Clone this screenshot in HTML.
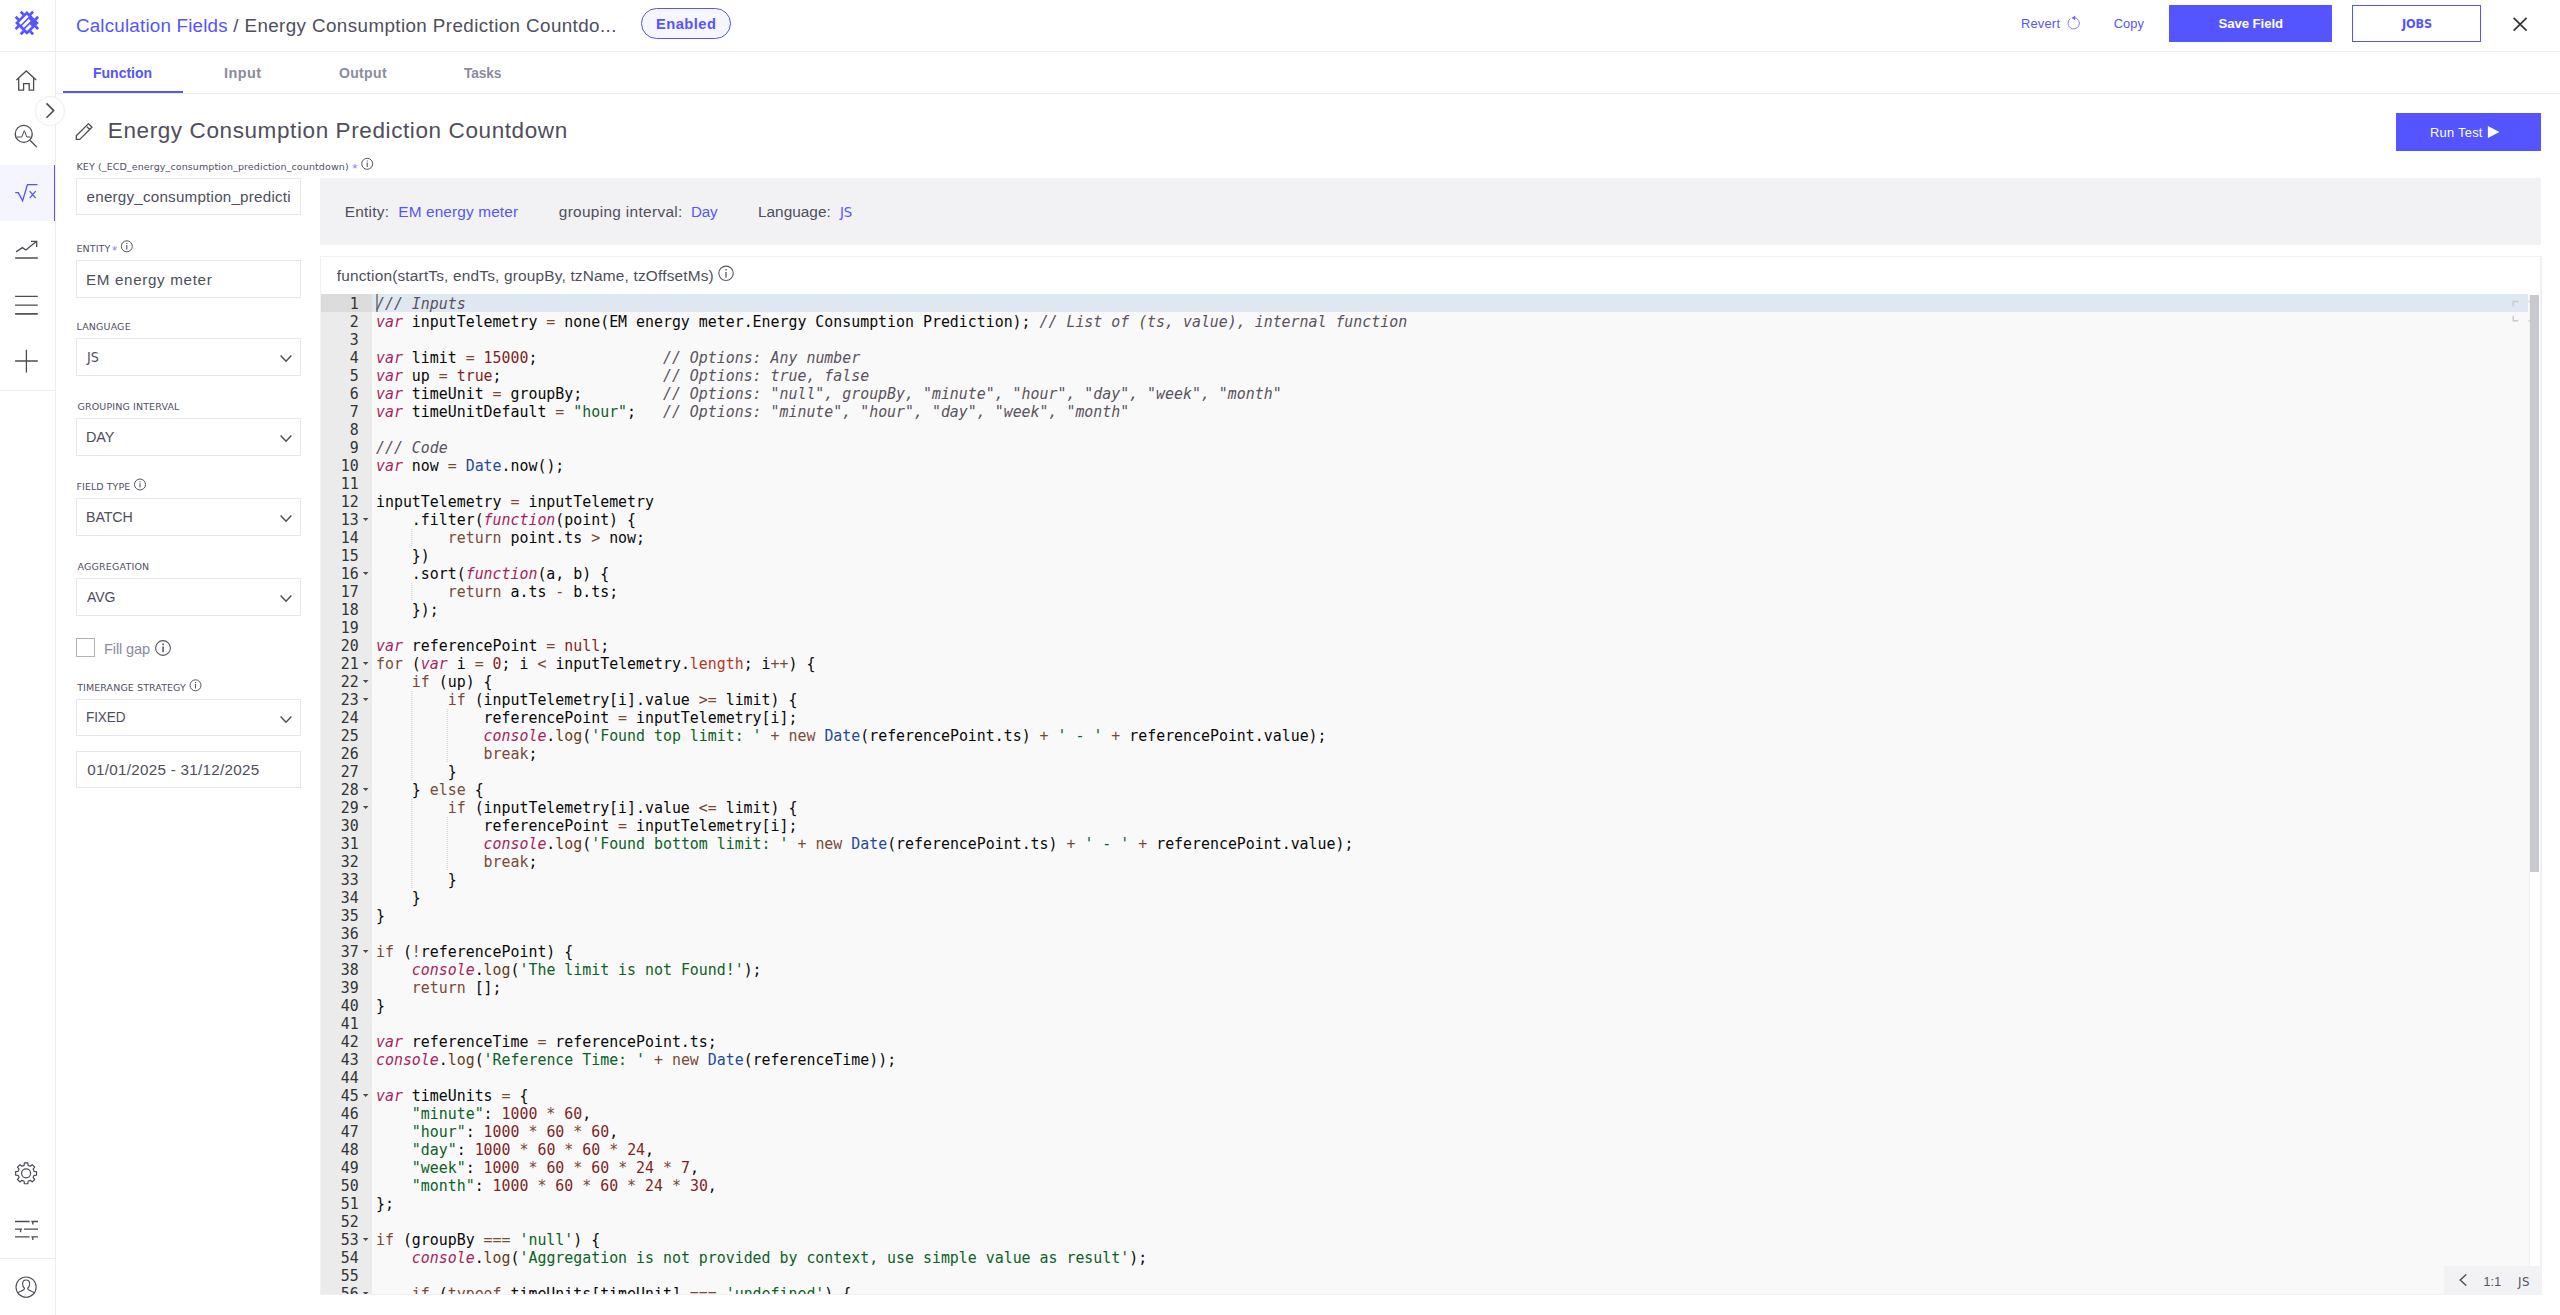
<!DOCTYPE html>
<html lang="en">
<head>
<meta charset="utf-8">
<title>Calculation Fields / Energy Consumption Prediction Countdown</title>
<style>
html,body{margin:0;padding:0;background:#fff;}
body{width:2560px;height:1315px;position:relative;overflow:hidden;font-family:"Liberation Sans", sans-serif;}
.abs{position:absolute;}
.t{position:absolute;white-space:pre;line-height:1;font-family:"Liberation Sans", sans-serif;}
.hl{position:absolute;height:1px;background:#eeeef1;}
.vl{position:absolute;width:1px;background:#eeeef1;}
.box{position:absolute;left:76px;width:223px;height:36px;border:1px solid #e7e7eb;background:#fff;}
.btn{position:absolute;box-sizing:border-box;}
svg{position:absolute;left:0;top:0;overflow:visible;}
.ic{fill:none;stroke:#4b4b57;stroke-width:1.3;stroke-linecap:butt;stroke-linejoin:miter;}
.icp{fill:none;stroke:#5555ff;stroke-width:1.3;}
/* editor */
#ed{position:absolute;left:320px;top:256px;width:2219px;height:1037px;border:1px solid #f1f1f5;border-right-width:2px;background:#fff;}
#gutter{position:absolute;left:321px;top:294px;width:51px;height:1000px;background:#ebebeb;overflow:hidden;}
#codebg{position:absolute;left:372px;top:294px;width:2157px;height:1000px;background:#f9f9f9;overflow:hidden;}
#gl{position:absolute;left:0;top:1px;width:54.8px;transform-origin:0 0;transform:scaleX(0.9308);font:16px/18px "DejaVu Sans Mono","Liberation Mono",monospace;color:#333;}
.gl{height:18px;text-align:right;padding-right:14.2px;position:relative;white-space:pre;}

.fw{position:absolute;right:3.9px;top:7.4px;width:0;height:0;border-left:3.1px solid transparent;border-right:3.1px solid transparent;border-top:3.8px solid #4a4a4a;}
#cl{position:absolute;left:4px;top:1px;transform-origin:0 0;transform:scaleX(0.9308);font:16px/18px "DejaVu Sans Mono","Liberation Mono",monospace;color:#080808;white-space:normal;}
.cl{height:18px;white-space:pre;}
.c{color:#5A525F;font-style:italic}
.s{color:#0B6125}
.n{color:#811F24}
.k{color:#794938}
.st{color:#A71D5D;font-style:italic}
.v{color:#234A97}
.sc{color:#B4371F}
.sf{color:#693A17}
.ig{display:inline-block;height:18px;vertical-align:top;background:linear-gradient(to bottom,rgba(0,0,0,.2) 50%,rgba(0,0,0,0) 50%) right top/1px 2px repeat-y;}
</style>
</head>
<body>
<!-- ======= frame lines ======= -->
<div class="hl" style="left:0;top:51px;width:2560px"></div>
<div class="vl" style="left:55px;top:0;height:1315px"></div>
<div class="hl" style="left:56px;top:93px;width:2504px"></div>
<div class="hl" style="left:0;top:390px;width:55px"></div>
<div class="hl" style="left:0;top:1258px;width:55px"></div>

<!-- ======= sidebar ======= -->
<nav>
<div class="abs" style="left:0;top:165px;width:54px;height:56px;background:#f5f5ff"></div>
<div class="abs" style="left:54px;top:165px;width:1.4px;height:56px;background:#5555ff"></div>
<svg width="56" height="1315" viewBox="0 0 56 1315">
  <!-- logo -->
  <g transform="translate(26.9,22.9) rotate(45) scale(1.065)" fill="#5555ff">
    <rect x="-7.85" y="-7.85" width="15.7" height="15.7"/>
    <rect x="-4.65" y="-11.6" width="2.6" height="4"/><rect x="2.05" y="-11.6" width="2.6" height="4"/>
    <rect x="-4.65" y="7.6" width="2.6" height="4"/><rect x="2.05" y="7.6" width="2.6" height="4"/>
    <rect y="-4.65" x="-11.6" height="2.6" width="4"/><rect y="2.05" x="-11.6" height="2.6" width="4"/>
    <rect y="-4.65" x="7.6" height="2.6" width="4"/><rect y="2.05" x="7.6" height="2.6" width="4"/>
    <g fill="#fff">
      <rect x="-5.5" y="-5.3" width="2.6" height="10.5"/>
      <rect x="-1.35" y="-3.8" width="2.6" height="9"/>
      <rect x="2.8" y="-1.0" width="2.6" height="6.2"/>
    </g>
  </g>
  <!-- home -->
  <path class="ic" d="M16.4 79.9 L26.3 70.9 L36.2 79.9 M18.7 78 V90.1 H23.6 V83.6 H29.2 V90.1 H33.6 V78"/>
  <!-- search / analyze -->
  <circle class="ic" cx="23.75" cy="133.9" r="8.5"/>
  <path class="ic" d="M30 140.2 L36.8 147.1"/>
  <path class="ic" style="stroke-width:1" d="M16.8 137 H21.8 L24.3 130.6 L26.8 137 H30.6"/>
  <!-- sqrt x (active) -->
  <path class="icp" d="M15.2 192.6 H18.3 L22.6 200.8 L27.4 184.7 H37.5 M29.7 191.2 L35.7 198.2 M35.7 191.2 L29.7 198.2"/>
  <!-- trend -->
  <path class="ic" d="M16.1 251.9 L22.4 247.6 L25.9 250 L36.3 241.5 M31 241.3 H36.7 V247 M15.1 258 H37.8"/>
  <!-- menu -->
  <path class="ic" d="M15.1 296.4 H37.8 M15.1 305.1 H37.8"/>
  <path class="ic" style="stroke-width:1.7" d="M15.1 313.9 H37.8"/>
  <!-- plus -->
  <path class="ic" d="M15.1 361 H37.8 M26.4 349.8 V372.4"/>
  <!-- gear -->
  <path class="ic" style="stroke-linejoin:round;stroke-width:1.2" d="M24.12 1165.34 L24.36 1162.84 L27.84 1162.84 L28.08 1165.34 L30.33 1166.27 L32.26 1164.68 L34.72 1167.14 L33.13 1169.07 L34.06 1171.32 L36.56 1171.56 L36.56 1175.04 L34.06 1175.28 L33.13 1177.53 L34.72 1179.46 L32.26 1181.92 L30.33 1180.33 L28.08 1181.26 L27.84 1183.76 L24.36 1183.76 L24.12 1181.26 L21.87 1180.33 L19.94 1181.92 L17.48 1179.46 L19.07 1177.53 L18.14 1175.28 L15.64 1175.04 L15.64 1171.56 L18.14 1171.32 L19.07 1169.07 L17.48 1167.14 L19.94 1164.68 L21.87 1166.27Z"/>
  <circle class="ic" style="stroke-width:1.2" cx="26.1" cy="1173.3" r="4.5"/>
  <!-- sliders -->
  <path class="ic" d="M15 1221.5 H29.6 M31.4 1221.5 H38 M32.8 1221.5 V1224.6 M15 1229.2 H22 M20.6 1229.2 V1232.2 M24 1229.2 H38 M15 1236.8 H29.6 M31.4 1236.8 H38 M32.8 1236.8 V1239.9"/>
  <!-- user -->
  <circle class="ic" style="stroke-width:1.1" cx="26.1" cy="1287.1" r="10.1"/>
  <path class="ic" style="stroke-width:1.1;stroke-linejoin:round" d="M26.1 1280 c2.2 0 3.5 1.7 3.5 3.9 c0 2 -1 3.6 -1.9 4.3 c0 1.6 1.2 2 3.2 2.7 c2 .7 3.2 1.4 3.6 2.4 M26.1 1280 c-2.2 0 -3.5 1.7 -3.5 3.9 c0 2 1 3.6 1.9 4.3 c0 1.6 -1.2 2 -3.2 2.7 c-2 .7 -3.2 1.4 -3.6 2.4"/>
</svg>
<!-- collapse button -->
<div class="abs" style="left:35px;top:96px;width:28px;height:28px;border-radius:50%;background:#fff;border:1px solid #f0f0f2;box-shadow:0 0 2px rgba(0,0,0,.04)"></div>
<svg width="80" height="130" viewBox="0 0 80 130"><path class="ic" style="stroke-width:1.6" d="M46.5 103.4 L53.7 110.6 L46.5 117.8"/></svg>
</nav>

<!-- ======= top bar ======= -->
<header>
<div class="abs" style="left:641px;top:8px;width:88px;height:29px;border:1px solid #5555ff;border-radius:16px;background:#f6f6ff"></div>
<div class="btn" style="left:2169px;top:5px;width:163px;height:37px;background:#5555ff"></div>
<div class="btn" style="left:2352px;top:5px;width:129px;height:37px;border:1px solid #5555ff;background:#fff"></div>
<svg width="2560" height="52" viewBox="0 0 2560 52">
  <!-- revert icon -->
  <path class="icp" style="stroke-width:1;stroke:#7f7dfd" d="M2070.2 18.7 A5.7 5.7 0 1 0 2074.6 17.6"/>
  <path fill="#6a68fe" d="M2071.6 17.9 L2075.2 15.6 L2075.2 20.3 Z"/>
  <!-- close -->
  <path class="ic" style="stroke:#333;stroke-width:1.7" d="M2513.6 17.8 L2526.6 30.6 M2526.6 17.8 L2513.6 30.6"/>
</svg>
</header>

<!-- ======= tabs ======= -->
<div class="abs" style="left:63px;top:91px;width:120px;height:2px;background:#5555ff"></div>

<!-- ======= title row ======= -->
<svg width="120" height="150" viewBox="0 0 120 150">
  <path class="ic" style="stroke-linejoin:round" d="M88.5 123.6 L91.9 127.2 L79.8 139.4 H76.3 V135.7 Z M86.9 126.7 L89.9 129.6"/>
</svg>
<div class="btn" style="left:2396px;top:113px;width:145px;height:38px;background:#5555ff"></div>
<svg width="2560" height="160" viewBox="0 0 2560 160"><path fill="#fff" d="M2487.9 125.9 L2499.4 131.9 L2487.9 138 Z"/></svg>

<!-- ======= left form ======= -->
<section>
<div class="box" style="top:178px;height:35px"></div>
<div class="box" style="top:260px"></div>
<div class="box" style="top:338px"></div>
<div class="box" style="top:418px"></div>
<div class="box" style="top:498px"></div>
<div class="box" style="top:578px"></div>
<div class="box" style="top:699px;height:35px"></div>
<div class="box" style="top:751px;height:35px"></div>
<div class="abs" style="left:76px;top:638px;width:17px;height:17px;border:1px solid #b2b2b4;background:#fff"></div>
<svg width="320" height="800" viewBox="0 0 320 800">
  <g class="ic" style="stroke-width:1.4">
    <path d="M280.6 355.6 L286 361.2 L291.4 355.6"/>
    <path d="M280.6 435.6 L286 441.2 L291.4 435.6"/>
    <path d="M280.6 515.6 L286 521.2 L291.4 515.6"/>
    <path d="M280.6 595.6 L286 601.2 L291.4 595.6"/>
    <path d="M280.6 716.6 L286 722.2 L291.4 716.6"/>
  </g>
</svg>
</section>

<!-- ======= info panel ======= -->
<div class="abs" style="left:320px;top:178px;width:2221px;height:67px;background:#f2f2f5"></div>

<!-- ======= editor ======= -->
<main>
<div id="ed"></div>
<div id="codebg">
  <div class="abs" style="left:0;top:0;width:2156px;height:18px;background:#dfe7f1"></div>
  <div class="abs" style="left:4px;top:0;width:2px;height:18px;background:#8e8e8e"></div>
  <div id="cl">
<div class="cl"><span class="c">/// Inputs</span></div>
<div class="cl"><span class="st">var</span> inputTelemetry <span class="k">=</span> none(EM energy meter.Energy Consumption Prediction); <span class="c">// List of (ts, value), internal function</span></div>
<div class="cl"> </div>
<div class="cl"><span class="st">var</span> limit <span class="k">=</span> <span class="n">15000</span>;              <span class="c">// Options: Any number</span></div>
<div class="cl"><span class="st">var</span> up <span class="k">=</span> <span class="n">true</span>;                  <span class="c">// Options: true, false</span></div>
<div class="cl"><span class="st">var</span> timeUnit <span class="k">=</span> groupBy;         <span class="c">// Options: "null", groupBy, "minute", "hour", "day", "week", "month"</span></div>
<div class="cl"><span class="st">var</span> timeUnitDefault <span class="k">=</span> <span class="s">"hour"</span>;   <span class="c">// Options: "minute", "hour", "day", "week", "month"</span></div>
<div class="cl"> </div>
<div class="cl"><span class="c">/// Code</span></div>
<div class="cl"><span class="st">var</span> now <span class="k">=</span> <span class="v">Date</span>.now();</div>
<div class="cl"> </div>
<div class="cl">inputTelemetry <span class="k">=</span> inputTelemetry</div>
<div class="cl">    .filter(<span class="st">function</span>(point) {</div>
<div class="cl"><span class="ig">    </span>    <span class="k">return</span> point.ts <span class="k">&gt;</span> now;</div>
<div class="cl">    })</div>
<div class="cl">    .sort(<span class="st">function</span>(a, b) {</div>
<div class="cl"><span class="ig">    </span>    <span class="k">return</span> a.ts <span class="k">-</span> b.ts;</div>
<div class="cl">    });</div>
<div class="cl"> </div>
<div class="cl"><span class="st">var</span> referencePoint <span class="k">=</span> <span class="n">null</span>;</div>
<div class="cl"><span class="k">for</span> (<span class="st">var</span> i <span class="k">=</span> <span class="n">0</span>; i <span class="k">&lt;</span> inputTelemetry.<span class="sc">length</span>; i<span class="k">++</span>) {</div>
<div class="cl">    <span class="k">if</span> (up) {</div>
<div class="cl"><span class="ig">    </span>    <span class="k">if</span> (inputTelemetry[i].value <span class="k">&gt;=</span> limit) {</div>
<div class="cl"><span class="ig">    </span><span class="ig">    </span>    referencePoint <span class="k">=</span> inputTelemetry[i];</div>
<div class="cl"><span class="ig">    </span><span class="ig">    </span>    <span class="st">console</span>.<span class="sf">log</span>(<span class="s">'Found top limit: '</span> <span class="k">+</span> <span class="k">new</span> <span class="v">Date</span>(referencePoint.ts) <span class="k">+</span> <span class="s">' - '</span> <span class="k">+</span> referencePoint.value);</div>
<div class="cl"><span class="ig">    </span><span class="ig">    </span>    <span class="k">break</span>;</div>
<div class="cl"><span class="ig">    </span>    }</div>
<div class="cl">    } <span class="k">else</span> {</div>
<div class="cl"><span class="ig">    </span>    <span class="k">if</span> (inputTelemetry[i].value <span class="k">&lt;=</span> limit) {</div>
<div class="cl"><span class="ig">    </span><span class="ig">    </span>    referencePoint <span class="k">=</span> inputTelemetry[i];</div>
<div class="cl"><span class="ig">    </span><span class="ig">    </span>    <span class="st">console</span>.<span class="sf">log</span>(<span class="s">'Found bottom limit: '</span> <span class="k">+</span> <span class="k">new</span> <span class="v">Date</span>(referencePoint.ts) <span class="k">+</span> <span class="s">' - '</span> <span class="k">+</span> referencePoint.value);</div>
<div class="cl"><span class="ig">    </span><span class="ig">    </span>    <span class="k">break</span>;</div>
<div class="cl"><span class="ig">    </span>    }</div>
<div class="cl">    }</div>
<div class="cl">}</div>
<div class="cl"> </div>
<div class="cl"><span class="k">if</span> (<span class="k">!</span>referencePoint) {</div>
<div class="cl">    <span class="st">console</span>.<span class="sf">log</span>(<span class="s">'The limit is not Found!'</span>);</div>
<div class="cl">    <span class="k">return</span> [];</div>
<div class="cl">}</div>
<div class="cl"> </div>
<div class="cl"><span class="st">var</span> referenceTime <span class="k">=</span> referencePoint.ts;</div>
<div class="cl"><span class="st">console</span>.<span class="sf">log</span>(<span class="s">'Reference Time: '</span> <span class="k">+</span> <span class="k">new</span> <span class="v">Date</span>(referenceTime));</div>
<div class="cl"> </div>
<div class="cl"><span class="st">var</span> timeUnits <span class="k">=</span> {</div>
<div class="cl">    <span class="s">"minute"</span>: <span class="n">1000</span> <span class="k">*</span> <span class="n">60</span>,</div>
<div class="cl">    <span class="s">"hour"</span>: <span class="n">1000</span> <span class="k">*</span> <span class="n">60</span> <span class="k">*</span> <span class="n">60</span>,</div>
<div class="cl">    <span class="s">"day"</span>: <span class="n">1000</span> <span class="k">*</span> <span class="n">60</span> <span class="k">*</span> <span class="n">60</span> <span class="k">*</span> <span class="n">24</span>,</div>
<div class="cl">    <span class="s">"week"</span>: <span class="n">1000</span> <span class="k">*</span> <span class="n">60</span> <span class="k">*</span> <span class="n">60</span> <span class="k">*</span> <span class="n">24</span> <span class="k">*</span> <span class="n">7</span>,</div>
<div class="cl">    <span class="s">"month"</span>: <span class="n">1000</span> <span class="k">*</span> <span class="n">60</span> <span class="k">*</span> <span class="n">60</span> <span class="k">*</span> <span class="n">24</span> <span class="k">*</span> <span class="n">30</span>,</div>
<div class="cl">};</div>
<div class="cl"> </div>
<div class="cl"><span class="k">if</span> (groupBy <span class="k">===</span> <span class="s">'null'</span>) {</div>
<div class="cl">    <span class="st">console</span>.<span class="sf">log</span>(<span class="s">'Aggregation is not provided by context, use simple value as result'</span>);</div>
<div class="cl"> </div>
<div class="cl">    <span class="k">if</span> (<span class="k">typeof</span> timeUnits[timeUnit] <span class="k">===</span> <span class="s">'undefined'</span>) {</div>
  </div>
</div>
<div id="gutter"><div class="abs" style="left:0;top:0;width:51px;height:18px;background:#dcdcdc"></div><div id="gl">
<div class="gl act">1</div>
<div class="gl">2</div>
<div class="gl">3</div>
<div class="gl">4</div>
<div class="gl">5</div>
<div class="gl">6</div>
<div class="gl">7</div>
<div class="gl">8</div>
<div class="gl">9</div>
<div class="gl">10</div>
<div class="gl">11</div>
<div class="gl">12</div>
<div class="gl">13<b class="fw"></b></div>
<div class="gl">14</div>
<div class="gl">15</div>
<div class="gl">16<b class="fw"></b></div>
<div class="gl">17</div>
<div class="gl">18</div>
<div class="gl">19</div>
<div class="gl">20</div>
<div class="gl">21<b class="fw"></b></div>
<div class="gl">22<b class="fw"></b></div>
<div class="gl">23<b class="fw"></b></div>
<div class="gl">24</div>
<div class="gl">25</div>
<div class="gl">26</div>
<div class="gl">27</div>
<div class="gl">28<b class="fw"></b></div>
<div class="gl">29<b class="fw"></b></div>
<div class="gl">30</div>
<div class="gl">31</div>
<div class="gl">32</div>
<div class="gl">33</div>
<div class="gl">34</div>
<div class="gl">35</div>
<div class="gl">36</div>
<div class="gl">37<b class="fw"></b></div>
<div class="gl">38</div>
<div class="gl">39</div>
<div class="gl">40</div>
<div class="gl">41</div>
<div class="gl">42</div>
<div class="gl">43</div>
<div class="gl">44</div>
<div class="gl">45<b class="fw"></b></div>
<div class="gl">46</div>
<div class="gl">47</div>
<div class="gl">48</div>
<div class="gl">49</div>
<div class="gl">50</div>
<div class="gl">51</div>
<div class="gl">52</div>
<div class="gl">53<b class="fw"></b></div>
<div class="gl">54</div>
<div class="gl">55</div>
<div class="gl">56<b class="fw"></b></div>
</div></div>
<!-- scrollbar -->
<div class="abs" style="left:2529px;top:294px;width:1px;height:1000px;background:#f2f2f6"></div>
<div class="abs" style="left:2530px;top:295px;width:9px;height:577px;background:#c9cad0"></div>
<!-- fullscreen icon -->
<svg width="2560" height="330" viewBox="0 0 2560 330"><path fill="none" stroke="#c9cad2" stroke-width="1.4" d="M2513.2 306.5 V301.5 H2518.2 M2513.2 315.8 V320.8 H2518.2 M2528.6 301.5 H2530 M2528.6 320.8 H2530"/></svg>
<!-- status bar -->
<div class="abs" style="left:2444px;top:1266px;width:97px;height:29px;background:#f2f2f5"></div>
<svg width="2560" height="1315" viewBox="0 0 2560 1315"><path class="ic" style="stroke-width:1.4" d="M2466.2 1274.4 L2460.2 1280 L2466.2 1285.6"/></svg>
</main>

<!-- ======= info icons ======= -->
<svg width="800" height="800" viewBox="0 0 800 800">
  <g fill="none" stroke="#55555f" stroke-width="1">
    <circle cx="367.2" cy="163.8" r="5.5"/><circle cx="126.8" cy="246.3" r="5.5"/><circle cx="140" cy="484.5" r="5.5"/><circle cx="195.5" cy="685.3" r="5.5"/>
    <circle cx="163" cy="648" r="7.4" stroke-width="1.05"/><circle cx="726" cy="273.3" r="7.2" stroke-width="1.1"/>
  </g>
  <g stroke="#55555f" stroke-width="1.1">
    <path d="M367.2 162.6 V166.9 M367.2 160.5 V161.6"/><path d="M126.8 245.1 V249.4 M126.8 243 V244.1"/><path d="M140 483.3 V487.6 M140 481.2 V482.3"/><path d="M195.5 684.1 V688.4 M195.5 682 V683.1"/>
    <path stroke-width="1.5" d="M163.1 646.6 V652.2 M163.1 643.6 V645.2"/><path stroke-width="1.3" d="M726 271.9 V277.4 M726 269 V270.5"/>
  </g>
</svg>

<!-- ======= texts ======= -->
<span class="t" id="t0" style="left:75.90px;top:16.60px;font-size:18.8px;font-weight:400;color:#5555ff;letter-spacing:0.206px;">Calculation Fields</span>
<span class="t" id="t1" style="left:233.20px;top:16.60px;font-size:18.8px;font-weight:400;color:#4e4e5c;letter-spacing:0.410px;">/ Energy Consumption Prediction Countdo...</span>
<span class="t" id="t2" style="left:656.15px;top:16.90px;font-size:14.1px;font-weight:700;color:#5555ff;letter-spacing:0.423px;transform-origin:0 0;transform:scaleX(1.0461);">Enabled</span>
<span class="t" id="t3" style="left:2020.90px;top:18.00px;font-size:12.9px;font-weight:400;color:#5555ff;letter-spacing:0.220px;">Revert</span>
<span class="t" id="t4" style="left:2113.75px;top:18.00px;font-size:12.9px;font-weight:400;color:#5555ff;letter-spacing:0.000px;">Copy</span>
<span class="t" id="t5" style="left:2218.60px;top:16.80px;font-size:13.2px;font-weight:700;color:#fff;letter-spacing:-0.089px;">Save Field</span>
<span class="t" id="t6" style="left:2401.50px;top:17.80px;font-size:12.5px;font-weight:700;color:#5555ff;letter-spacing:-0.120px;font-family:DejaVu Sans,sans-serif;transform-origin:0 0;transform:scaleX(0.9037);">JOBS</span>
<span class="t" id="t7" style="left:93.06px;top:65.90px;font-size:14.0px;font-weight:700;color:#5555ff;letter-spacing:-0.021px;">Function</span>
<span class="t" id="t8" style="left:224.17px;top:65.90px;font-size:14.0px;font-weight:700;color:#8b8b9f;letter-spacing:0.420px;transform-origin:0 0;transform:scaleX(1.0294);">Input</span>
<span class="t" id="t9" style="left:338.90px;top:65.90px;font-size:14.0px;font-weight:700;color:#8b8b9f;letter-spacing:0.360px;">Output</span>
<span class="t" id="t10" style="left:464.40px;top:65.90px;font-size:14.0px;font-weight:700;color:#8b8b9f;letter-spacing:-0.120px;transform-origin:0 0;transform:scaleX(0.9808);">Tasks</span>
<span class="t" id="t11" style="left:107.80px;top:119.80px;font-size:22.5px;font-weight:400;color:#4e4e5c;letter-spacing:0.603px;">Energy Consumption Prediction Countdown</span>
<span class="t" id="t12" style="left:2429.90px;top:127.00px;font-size:12.9px;font-weight:400;color:#fff;letter-spacing:0.271px;">Run Test</span>
<span class="t" id="t13" style="left:76.50px;top:162.00px;font-size:9.5px;font-weight:400;color:#505064;letter-spacing:0.107px;font-family:DejaVu Sans,sans-serif;">KEY (_ECD_energy_consumption_prediction_countdown)</span>
<span class="t" id="t14" style="left:352.30px;top:161.60px;font-size:13px;font-weight:400;color:#8583fd;letter-spacing:0.000px;">*</span>
<span class="t" id="t15" style="left:86.60px;top:188.90px;font-size:15.2px;font-weight:400;color:#4e4e5c;letter-spacing:0.215px;">energy_consumption_predicti</span>
<span class="t" id="t16" style="left:76.50px;top:244.00px;font-size:9.5px;font-weight:400;color:#505064;letter-spacing:0.100px;font-family:DejaVu Sans,sans-serif;">ENTITY</span>
<span class="t" id="t17" style="left:112.00px;top:243.60px;font-size:13px;font-weight:400;color:#8583fd;letter-spacing:0.000px;">*</span>
<span class="t" id="t18" style="left:85.90px;top:271.50px;font-size:15.2px;font-weight:400;color:#4e4e5c;letter-spacing:0.671px;">EM energy meter</span>
<span class="t" id="t19" style="left:76.50px;top:322.00px;font-size:9.5px;font-weight:400;color:#505064;letter-spacing:0.143px;font-family:DejaVu Sans,sans-serif;">LANGUAGE</span>
<span class="t" id="t20" style="left:86.62px;top:351.00px;font-size:13.8px;font-weight:400;color:#4e4e5c;letter-spacing:-0.120px;font-family:DejaVu Sans,sans-serif;transform-origin:0 0;transform:scaleX(0.9239);">JS</span>
<span class="t" id="t21" style="left:77.50px;top:402.00px;font-size:9.5px;font-weight:400;color:#505064;letter-spacing:0.125px;font-family:DejaVu Sans,sans-serif;">GROUPING INTERVAL</span>
<span class="t" id="t22" style="left:85.55px;top:429.00px;font-size:15.2px;font-weight:400;color:#4e4e5c;letter-spacing:-0.120px;transform-origin:0 0;transform:scaleX(0.9475);">DAY</span>
<span class="t" id="t23" style="left:76.50px;top:482.00px;font-size:9.5px;font-weight:400;color:#505064;letter-spacing:0.056px;font-family:DejaVu Sans,sans-serif;">FIELD TYPE</span>
<span class="t" id="t24" style="left:85.56px;top:509.00px;font-size:15.2px;font-weight:400;color:#4e4e5c;letter-spacing:-0.120px;transform-origin:0 0;transform:scaleX(0.9378);">BATCH</span>
<span class="t" id="t25" style="left:77.50px;top:562.00px;font-size:9.5px;font-weight:400;color:#505064;letter-spacing:0.175px;font-family:DejaVu Sans,sans-serif;">AGGREGATION</span>
<span class="t" id="t26" style="left:86.50px;top:589.00px;font-size:15.2px;font-weight:400;color:#4e4e5c;letter-spacing:-0.120px;transform-origin:0 0;transform:scaleX(0.9241);">AVG</span>
<span class="t" id="t27" style="left:104.05px;top:640.75px;font-size:15.4px;font-weight:400;color:#8b8b9e;letter-spacing:-0.120px;transform-origin:0 0;transform:scaleX(0.9478);">Fill gap</span>
<span class="t" id="t28" style="left:77.20px;top:682.90px;font-size:9.5px;font-weight:400;color:#505064;letter-spacing:0.082px;font-family:DejaVu Sans,sans-serif;">TIMERANGE STRATEGY</span>
<span class="t" id="t29" style="left:85.61px;top:709.00px;font-size:15.2px;font-weight:400;color:#4e4e5c;letter-spacing:-0.120px;transform-origin:0 0;transform:scaleX(0.8937);">FIXED</span>
<span class="t" id="t30" style="left:87.25px;top:762.00px;font-size:15.2px;font-weight:400;color:#4e4e5c;letter-spacing:0.295px;">01/01/2025 - 31/12/2025</span>
<span class="t" id="t31" style="left:344.75px;top:204.00px;font-size:15.4px;font-weight:400;color:#4e4e5c;letter-spacing:0.250px;">Entity:</span>
<span class="t" id="t32" style="left:398.25px;top:204.00px;font-size:15.4px;font-weight:400;color:#5555ff;letter-spacing:0.125px;">EM energy meter</span>
<span class="t" id="t33" style="left:558.75px;top:204.00px;font-size:15.4px;font-weight:400;color:#4e4e5c;letter-spacing:0.324px;">grouping interval:</span>
<span class="t" id="t34" style="left:691.27px;top:204.00px;font-size:15.4px;font-weight:400;color:#5555ff;letter-spacing:-0.120px;transform-origin:0 0;transform:scaleX(0.9809);">Day</span>
<span class="t" id="t35" style="left:758.00px;top:204.00px;font-size:15.4px;font-weight:400;color:#4e4e5c;letter-spacing:0.000px;">Language:</span>
<span class="t" id="t36" style="left:840.17px;top:205.30px;font-size:14.5px;font-weight:400;color:#5555ff;letter-spacing:-0.120px;font-family:DejaVu Sans,sans-serif;transform-origin:0 0;transform:scaleX(0.9186);">JS</span>
<span class="t" id="t37" style="left:336.75px;top:267.50px;font-size:15.4px;font-weight:400;color:#4e4e5c;letter-spacing:0.188px;">function(startTs, endTs, groupBy, tzName, tzOffsetMs)</span>
<span class="t" id="t38" style="left:2483.60px;top:1276.00px;font-size:12.4px;font-weight:400;color:#505064;letter-spacing:0.100px;">1:1</span>
<span class="t" id="t39" style="left:2517.51px;top:1277.00px;font-size:11.7px;font-weight:400;color:#505064;letter-spacing:0.526px;font-family:DejaVu Sans,sans-serif;transform-origin:0 0;transform:scaleX(1.0139);">JS</span>
</body>
</html>
